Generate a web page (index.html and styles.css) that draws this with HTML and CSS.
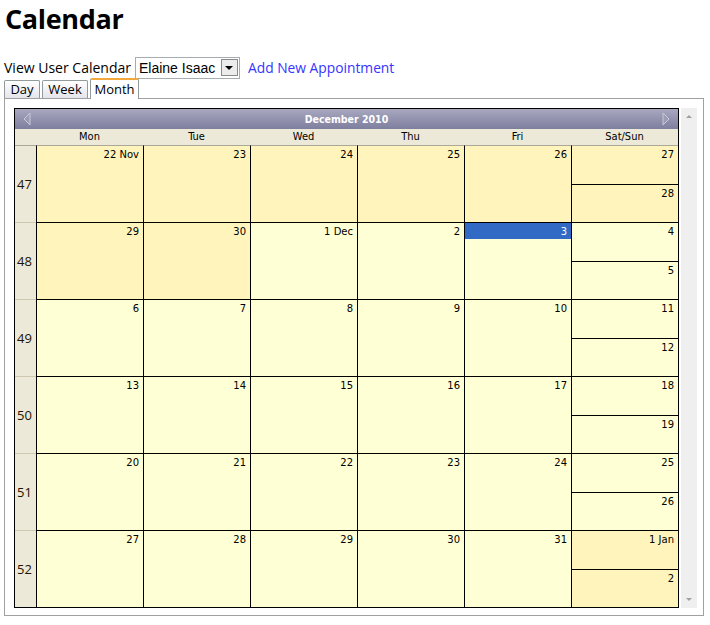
FILE: index.html
```html
<!DOCTYPE html>
<html>
<head>
<meta charset="utf-8">
<title>Calendar</title>
<link rel="stylesheet" href="styles.css">
</head>
<body>
<h1 class="title">Calendar</h1>
<div class="toolbar">
  <span class="label">View User Calendar</span>
  <div class="select"><span class="select-text">Elaine Isaac</span><span class="select-btn"><span class="tri"></span></span></div>
  <a class="link" href="#">Add New Appointment</a>
</div>
<div class="tabs">
  <div class="tab tab-day">Day</div>
  <div class="tab tab-week">Week</div>
  <div class="tab tab-active">Month</div>
</div>
<div class="panel">
  <div class="cal">
    <div class="cal-title">
      <svg class="arrow" width="8" height="14" viewBox="0 0 8 14"><path d="M7 1 L1 7 L7 13 Z" fill="#9c9cb4" stroke="#c8c8d8" stroke-width="1"/></svg>
      <span class="cal-title-text">December 2010</span>
      <svg class="arrow" width="8" height="14" viewBox="0 0 8 14"><path d="M1 1 L7 7 L1 13 Z" fill="#9c9cb4" stroke="#c8c8d8" stroke-width="1"/></svg>
    </div>
    <div class="grid">
      <div class="dh dh-week"></div>
      <div class="dh">Mon</div>
      <div class="dh">Tue</div>
      <div class="dh">Wed</div>
      <div class="dh">Thu</div>
      <div class="dh">Fri</div>
      <div class="dh">Sat/Sun</div>

      <div class="wk wk-first">47</div>
      <div class="day other first"><div class="num">22 Nov</div></div>
      <div class="day other first"><div class="num">23</div></div>
      <div class="day other first"><div class="num">24</div></div>
      <div class="day other first"><div class="num">25</div></div>
      <div class="day other first"><div class="num">26</div></div>
      <div class="day we first"><div class="half other"><div class="num">27</div></div><div class="half half2 other"><div class="num">28</div></div></div>

      <div class="wk">48</div>
      <div class="day other"><div class="num">29</div></div>
      <div class="day other"><div class="num">30</div></div>
      <div class="day"><div class="num">1 Dec</div></div>
      <div class="day"><div class="num">2</div></div>
      <div class="day"><div class="num today">3</div></div>
      <div class="day we"><div class="half"><div class="num">4</div></div><div class="half half2"><div class="num">5</div></div></div>

      <div class="wk">49</div>
      <div class="day"><div class="num">6</div></div>
      <div class="day"><div class="num">7</div></div>
      <div class="day"><div class="num">8</div></div>
      <div class="day"><div class="num">9</div></div>
      <div class="day"><div class="num">10</div></div>
      <div class="day we"><div class="half"><div class="num">11</div></div><div class="half half2"><div class="num">12</div></div></div>

      <div class="wk">50</div>
      <div class="day"><div class="num">13</div></div>
      <div class="day"><div class="num">14</div></div>
      <div class="day"><div class="num">15</div></div>
      <div class="day"><div class="num">16</div></div>
      <div class="day"><div class="num">17</div></div>
      <div class="day we"><div class="half"><div class="num">18</div></div><div class="half half2"><div class="num">19</div></div></div>

      <div class="wk">51</div>
      <div class="day"><div class="num">20</div></div>
      <div class="day"><div class="num">21</div></div>
      <div class="day"><div class="num">22</div></div>
      <div class="day"><div class="num">23</div></div>
      <div class="day"><div class="num">24</div></div>
      <div class="day we"><div class="half"><div class="num">25</div></div><div class="half half2"><div class="num">26</div></div></div>

      <div class="wk">52</div>
      <div class="day"><div class="num">27</div></div>
      <div class="day"><div class="num">28</div></div>
      <div class="day"><div class="num">29</div></div>
      <div class="day"><div class="num">30</div></div>
      <div class="day"><div class="num">31</div></div>
      <div class="day we"><div class="half other"><div class="num">1 Jan</div></div><div class="half half2 other"><div class="num">2</div></div></div>
    </div>
  </div>
  <div class="scrollbar">
    <svg width="16" height="16" viewBox="0 0 16 16"><path d="M5 10 L8 7 L11 10 Z" fill="#a0a0a0"/></svg>
    <svg width="16" height="16" viewBox="0 0 16 16"><path d="M5 6 L8 9 L11 6 Z" fill="#a0a0a0"/></svg>
  </div>
</div>
</body>
</html>
```
FILE: styles.css
```css
html, body {
  margin: 0;
  padding: 0;
  background: #ffffff;
}
body {
  padding: 0 4px;
  font-family: "Open Sans", "DejaVu Sans", sans-serif;
  color: #000;
}
.title {
  margin: 0 0 20px 1px;
  font-family: "Open Sans", sans-serif;
  font-weight: 700;
  font-size: 27px;
  line-height: 37px;
  letter-spacing: -0.35px;
}
.toolbar {
  display: flex;
  align-items: center;
  height: 21px;
  font-size: 14px;
}
.label {
  margin-right: 4px;
  line-height: 21px;
}
.select {
  display: flex;
  align-items: center;
  box-sizing: border-box;
  width: 105px;
  height: 22px;
  border: 1px solid #a5acb2;
  padding: 0 1px 0 3px;
  margin-right: 8px;
}
.select-text {
  flex: 1;
  font-family: "Liberation Sans", Arial, sans-serif;
  font-size: 14px;
}
.select-btn {
  box-sizing: border-box;
  width: 17px;
  height: 17px;
  border: 1px solid #8a8a8a;
  background: #ececec;
  display: flex;
  align-items: center;
  justify-content: center;
}
.tri {
  width: 0;
  height: 0;
  border-left: 4px solid transparent;
  border-right: 4px solid transparent;
  border-top: 4px solid #000;
  margin-top: 1px;
}
.link {
  color: #3535ff;
  text-decoration: none;
  line-height: 21px;
  font-size: 13.8px;
}
.tabs {
  display: flex;
  align-items: flex-end;
  gap: 2px;
  height: 21px;
  margin-bottom: -1px;
  font-size: 13px;
}
.tab {
  box-sizing: border-box;
  height: 18px;
  margin-bottom: 1px;
  border: 1px solid #919b9c;
  border-bottom: none;
  border-radius: 2px 2px 0 0;
  background: linear-gradient(#ffffff, #e4e4ec);
  line-height: 17px;
  text-align: center;
  color: #000;
}
.tab-day {
  width: 36px;
}
.tab-week {
  width: 46px;
}
.tab-active {
  width: 49px;
  height: 21px;
  margin-bottom: 0;
  background: #ffffff;
  border-top: 2px solid #f3a83b;
  line-height: 19px;
}
.panel {
  display: flex;
  align-items: flex-start;
  gap: 2px;
  box-sizing: border-box;
  width: 700px;
  border: 1px solid #a0a0a0;
  padding: 9px 6px 7px 9px;
}
.cal {
  width: 665px;
  box-sizing: border-box;
  border: 1px solid #000;
}
.cal-title {
  height: 20px;
  display: flex;
  align-items: center;
  justify-content: space-between;
  padding: 0 8px;
  background: linear-gradient(#a8a8c0, #7e7e9e);
}
.cal-title-text {
  font-family: "DejaVu Sans Condensed", "DejaVu Sans", sans-serif;
  font-stretch: condensed;
  font-weight: 700;
  font-size: 10.5px;
  color: #ffffff;
}
.grid {
  display: grid;
  grid-template-columns: 21px repeat(6, 107px);
  grid-template-rows: 16px repeat(6, 77px);
}
.dh {
  background: #ece9d8;
  font-family: "DejaVu Sans Condensed", "DejaVu Sans", sans-serif;
  font-stretch: condensed;
  font-size: 11px;
  line-height: 16px;
  text-align: center;
}
.wk {
  box-sizing: border-box;
  background: #ece9d8;
  border-top: 1px solid #cdc8ae;
  display: flex;
  align-items: center;
  padding-left: 2px;
  font-size: 13px;
  color: #1e1400;
}
.wk-first {
  border-top-color: #aca899;
}
.day {
  box-sizing: border-box;
  border-top: 1px solid #000;
  border-left: 1px solid #000;
  background: #ffffd5;
}
.day.first {
  border-top-color: #aca899;
}
.day.other, .half.other {
  background: #fff4bc;
}
.we {
  display: flex;
  flex-direction: column;
  background: transparent;
}
.half {
  height: 38px;
  background: #ffffd5;
}
.half2 {
  flex: 1;
  border-top: 1px solid #000;
}
.num {
  height: 16px;
  line-height: 17px;
  padding-right: 4px;
  text-align: right;
  font-family: "DejaVu Sans", Verdana, sans-serif;
  font-size: 10px;
  color: #000;
}
.today {
  background: #316ac5;
  color: #ffffff;
}
.scrollbar {
  width: 16px;
  height: 500px;
  background: #efefef;
  display: flex;
  flex-direction: column;
  justify-content: space-between;
}
.scrollbar svg {
  display: block;
}
```
